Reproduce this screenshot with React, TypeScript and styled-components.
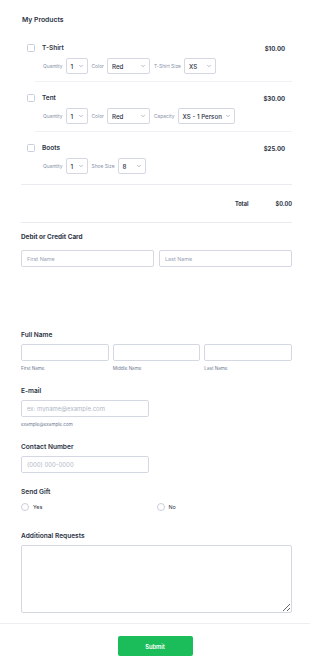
import React from "react";
import styled, { createGlobalStyle } from "styled-components";
import { ChevronDown } from "lucide-react";

const GlobalStyle = createGlobalStyle`
  body {
    margin: 0;
    background: #ffffff;
    font-family: Inter, "Noto Sans", "Liberation Sans", sans-serif;
    color: #2c3345;
  }
  * {
    box-sizing: border-box;
  }
`;

type Option = { label: string; value: string; width: number };
type Product = { name: string; price: string; options: Option[] };

const products: Product[] = [
  {
    name: "T-Shirt",
    price: "$10.00",
    options: [
      { label: "Quantity", value: "1", width: 22 },
      { label: "Color", value: "Red", width: 43 },
      { label: "T-Shirt Size", value: "XS", width: 32 },
    ],
  },
  {
    name: "Tent",
    price: "$30.00",
    options: [
      { label: "Quantity", value: "1", width: 22 },
      { label: "Color", value: "Red", width: 43 },
      { label: "Capacity", value: "XS - 1 Person", width: 57 },
    ],
  },
  {
    name: "Boots",
    price: "$25.00",
    options: [
      { label: "Quantity", value: "1", width: 22 },
      { label: "Shoe Size", value: "8", width: 28 },
    ],
  },
];

export default function App() {
  return (
    <>
      <GlobalStyle />
      <Page>
        <SectionTitle>My Products</SectionTitle>

        <ProductList>
          {products.map((p, i) => (
            <ProductItem key={p.name} last={i === products.length - 1}>
              <ProductHead>
                <CheckBox />
                <ProductName>{p.name}</ProductName>
                <Price>{p.price}</Price>
              </ProductHead>
              <OptionsRow>
                {p.options.map((o) => (
                  <OptionGroup key={o.label}>
                    <OptionLabel>{o.label}</OptionLabel>
                    <SelectBox style={{ width: o.width }}>
                      <span>{o.value}</span>
                      <ChevronDown size={6} strokeWidth={2} color="#6f7a92" />
                    </SelectBox>
                  </OptionGroup>
                ))}
              </OptionsRow>
            </ProductItem>
          ))}
        </ProductList>

        <TotalRow>
          <TotalLabel>Total</TotalLabel>
          <TotalValue>$0.00</TotalValue>
        </TotalRow>

        <CardLabel>Debit or Credit Card</CardLabel>
        <InputRow cols={2}>
          <TextInput placeholder="First Name" />
          <TextInput placeholder="Last Name" />
        </InputRow>

        <FieldLabel top={63}>Full Name</FieldLabel>
        <InputRow cols={3}>
          <div>
            <TextInput />
            <SubLabel>First Name</SubLabel>
          </div>
          <div>
            <TextInput />
            <SubLabel>Middle Name</SubLabel>
          </div>
          <div>
            <TextInput />
            <SubLabel>Last Name</SubLabel>
          </div>
        </InputRow>

        <FieldLabel top={13}>E-mail</FieldLabel>
        <HalfInput placeholder="ex: myname@example.com" />
        <SubLabel>example@example.com</SubLabel>

        <FieldLabel top={13}>Contact Number</FieldLabel>
        <HalfInput placeholder="(000) 000-0000" />

        <FieldLabel top={14}>Send Gift</FieldLabel>
        <RadioRow>
          <RadioOption>
            <RadioCircle />
            Yes
          </RadioOption>
          <RadioOption>
            <RadioCircle />
            No
          </RadioOption>
        </RadioRow>

        <FieldLabel top={19}>Additional Requests</FieldLabel>
        <TextArea />
      </Page>

      <Footer>
        <SubmitButton>Submit</SubmitButton>
      </Footer>
    </>
  );
}

const Page = styled.div`
  padding: 0 18px 0 21px;
`;

const SectionTitle = styled.div`
  margin-top: 14px;
  padding-left: 1px;
  font-size: 6.8px;
  line-height: 12px;
  font-weight: 600;
  color: #2c3345;
`;

const ProductList = styled.div`
  padding-left: 6px;
  padding-top: 6px;
`;

const ProductItem = styled.div<{ last?: boolean }>`
  padding: 12px 0 ${(p) => (p.last ? "10px" : "8px")} 0;
  border-bottom: ${(p) => (p.last ? "1px solid #eaebf0" : "none")};
  position: relative;
  &::after {
    content: "";
    display: ${(p) => (p.last ? "none" : "block")};
    position: absolute;
    left: 8px;
    right: 0;
    bottom: 0;
    border-bottom: 1px solid #f0f1f4;
  }
  ${(p) => (p.last ? "margin-left: -6px; padding-left: 6px;" : "")}
`;

const ProductHead = styled.div`
  display: flex;
  align-items: center;
  height: 8px;
`;

const CheckBox = styled.span`
  width: 8px;
  height: 8px;
  border: 1px solid #c8ceda;
  border-radius: 1.5px;
  background: #fff;
  flex-shrink: 0;
`;

const ProductName = styled.span`
  margin-left: 7px;
  font-size: 6.5px;
  font-weight: 600;
  color: #2c3345;
`;

const Price = styled.span`
  margin-left: auto;
  margin-right: 7px;
  font-size: 6px;
  font-weight: 700;
  color: #2c3345;
`;

const OptionsRow = styled.div`
  display: flex;
  align-items: center;
  gap: 4px;
  margin-top: 6px;
  padding-left: 16px;
`;

const OptionGroup = styled.div`
  display: flex;
  align-items: center;
  gap: 3px;
`;

const OptionLabel = styled.span`
  font-size: 4.9px;
  color: #8792a8;
  white-space: nowrap;
`;

const SelectBox = styled.div`
  height: 16px;
  display: flex;
  align-items: center;
  justify-content: space-between;
  padding: 0 3px 0 4px;
  border: 1px solid #d3d8e2;
  border-radius: 2px;
  background: #fff;
  font-size: 6.2px;
  font-weight: 500;
  color: #2c3345;
  white-space: nowrap;
  gap: 2px;
`;

const TotalRow = styled.div`
  height: 38px;
  display: flex;
  align-items: center;
  justify-content: flex-end;
  border-bottom: 1px solid #eaebf0;
  font-size: 5.6px;
  font-weight: 700;
  color: #2c3345;
`;

const TotalLabel = styled.span`
  margin-right: 27px;
`;

const TotalValue = styled.span``;

const CardLabel = styled.div`
  margin-top: 9px;
  font-size: 6.4px;
  line-height: 10px;
  font-weight: 700;
  color: #2c3345;
`;

const FieldLabel = styled.div<{ top: number }>`
  margin-top: ${(p) => p.top}px;
  font-size: 6.6px;
  line-height: 10px;
  font-weight: 600;
  color: #2c3345;
`;

const InputRow = styled.div<{ cols: number }>`
  display: grid;
  grid-template-columns: repeat(${(p) => p.cols}, 1fr);
  gap: ${(p) => (p.cols === 2 ? "5px" : "4px")};
  margin-top: ${(p) => (p.cols === 2 ? "8px" : "4px")};
`;

const TextInput = styled.input`
  display: block;
  width: 100%;
  height: 17px;
  border: 1px solid #d3d8e2;
  border-radius: 2px;
  padding: 0 5px;
  font-family: inherit;
  font-size: 5.4px;
  color: #2c3345;
  background: #fff;
  outline: none;
  &::placeholder {
    color: #9aa3b5;
  }
`;

const HalfInput = styled(TextInput)`
  width: 128px;
  margin-top: 4px;
  font-size: 6px;
  &::placeholder {
    color: #b0b7c6;
  }
`;

const SubLabel = styled.div`
  margin-top: 4px;
  font-size: 4.6px;
  line-height: 8px;
  color: #6f7a92;
`;

const RadioRow = styled.div`
  display: grid;
  grid-template-columns: 1fr 1fr;
  margin-top: 5px;
  height: 10px;
`;

const RadioOption = styled.div`
  display: flex;
  align-items: center;
  gap: 4px;
  font-size: 5.4px;
  color: #2c3345;
`;

const RadioCircle = styled.span`
  width: 8px;
  height: 8px;
  border: 1px solid #c8ceda;
  border-radius: 50%;
  background: #fff;
`;

const TextArea = styled.textarea`
  display: block;
  width: 100%;
  height: 68px;
  margin-top: 4px;
  border: 1px solid #d3d8e2;
  border-radius: 2px;
  background: #fff;
  resize: both;
  outline: none;
`;

const Footer = styled.div`
  margin-top: 10px;
  border-top: 1px solid #eceef2;
  padding-top: 12px;
  display: flex;
  justify-content: center;
  padding-bottom: 17px;
`;

const SubmitButton = styled.button`
  width: 75px;
  height: 20px;
  border: none;
  border-radius: 2px;
  background: #1bbd5b;
  color: #ffffff;
  font-family: inherit;
  font-size: 5.8px;
  font-weight: 600;
  cursor: pointer;
`;
